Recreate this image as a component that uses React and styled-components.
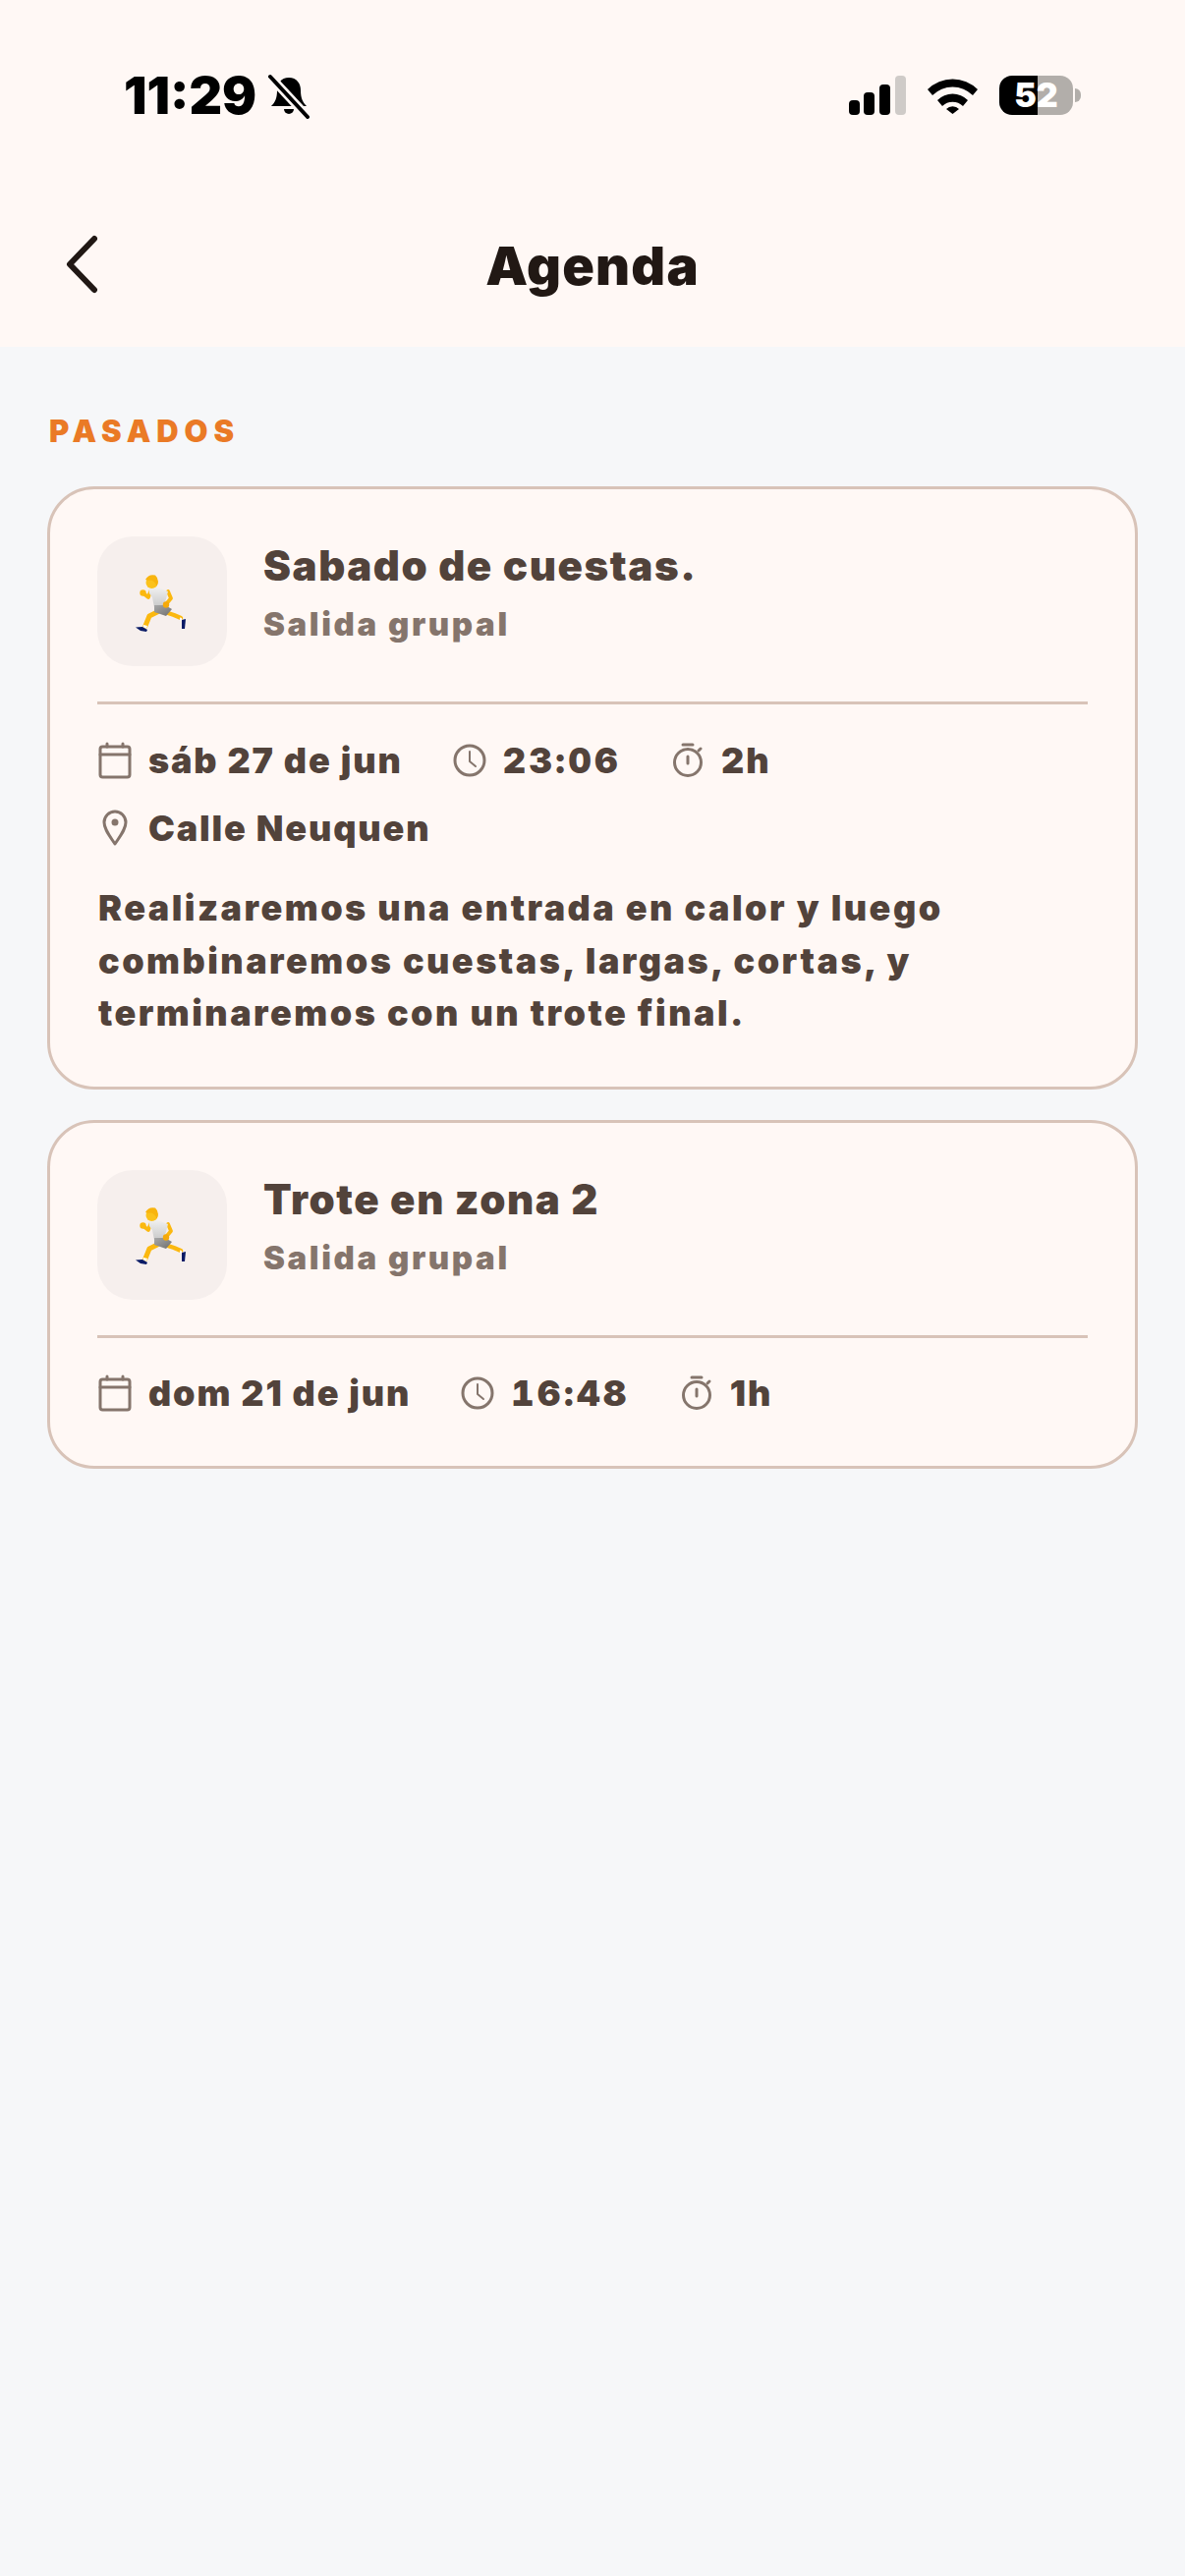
import React from "react";
import styled, { createGlobalStyle } from "styled-components";

const GlobalStyle = createGlobalStyle`
  html, body { margin: 0; padding: 0; background: #f6f7f9; }
  body { font-family: Inter, "Liberation Sans", sans-serif; }
  * { box-sizing: border-box; }
`;

const Page = styled.div`
  width: 1206px;
  min-height: 2622px;
  background: #f6f7f9;
  display: flex;
  flex-direction: column;
`;

const Header = styled.header`
  background: #fff8f5;
  height: 353px;
  display: flex;
  flex-direction: column;
`;

const StatusBar = styled.div`
  height: 190px;
  padding: 67px 106px 0 126px;
  display: flex;
  justify-content: space-between;
  align-items: flex-start;
`;

const TimeGroup = styled.div`
  display: flex;
  align-items: center;
  gap: 11px;
  height: 62px;
`;

const Time = styled.span`
  font-size: 52px;
  font-weight: 900;
  color: #000;
  line-height: 62px;
`;

const StatusIcons = styled.div`
  display: flex;
  align-items: center;
  height: 60px;
`;

const SignalIcon = styled.svg`
  width: 58px;
  height: 40px;
  margin-right: 22px;
`;

const WifiIcon = styled.svg`
  width: 51px;
  height: 38px;
  margin-right: 22px;
`;

const Battery = styled.div`
  width: 75px;
  height: 40px;
  border-radius: 13px;
  overflow: hidden;
  background: linear-gradient(90deg, #000 0 52%, #b2aeaa 52% 100%);
  color: #fff;
  font-size: 34px;
  font-weight: 900;
  line-height: 40px;
  text-align: center;
`;

const BatteryNub = styled.div`
  width: 6px;
  height: 14px;
  margin-left: 2px;
  background: #b2aeaa;
  border-radius: 0 7px 7px 0;
`;

const Nav = styled.div`
  height: 163px;
  padding-bottom: 2px;
  position: relative;
  display: flex;
  align-items: center;
  justify-content: center;
`;

const BackIcon = styled.svg`
  position: absolute;
  left: 64px;
  top: 49px;
  width: 40px;
  height: 60px;
`;

const Title = styled.h1`
  margin: 0;
  font-size: 54px;
  font-weight: 900;
  letter-spacing: 1.2px;
  color: #211814;
  line-height: 60px;
`;

const Content = styled.main`
  padding: 67px 48px 0;
  display: flex;
  flex-direction: column;
`;

const SectionLabel = styled.div`
  font-size: 31px;
  font-weight: 900;
  letter-spacing: 5.9px;
  color: #ea7a26;
  line-height: 38px;
  margin: 0 0 37px 2px;
`;

const CardList = styled.div`
  display: flex;
  flex-direction: column;
  gap: 31px;
`;

const Card = styled.article`
  width: 1110px;
  background: #fff8f5;
  border: 3px solid #d8c3b8;
  border-radius: 48px;
  padding: 48px 48px 39px;
`;

const CardTop = styled.div`
  display: flex;
  gap: 37px;
  padding-bottom: 36px;
  border-bottom: 3px solid #d8c3b8;
`;

const EmojiBox = styled.div`
  width: 132px;
  height: 132px;
  border-radius: 36px;
  background: #f6efed;
  display: flex;
  align-items: center;
  justify-content: center;
`;

const Runner = styled.svg`
  width: 53px;
  height: 59px;
  margin-top: 4px;
  margin-left: -2px;
`;

const CardHeading = styled.div`
  display: flex;
  flex-direction: column;
  padding-top: 3px;
`;

const CardTitle = styled.h2`
  margin: 0;
  font-size: 42px;
  font-weight: 900;
  letter-spacing: 1.55px;
  color: #52433b;
  line-height: 54px;
`;

const CardSubtitle = styled.div`
  font-size: 33px;
  font-weight: 900;
  letter-spacing: 2.6px;
  color: #85756c;
  line-height: 42px;
  margin-top: 11px;
`;

const MetaRow = styled.div`
  display: flex;
  align-items: center;
  gap: 50px;
  height: 69px;
  margin-top: ${(p) => (p.$first ? "22px" : "0")};
`;

const MetaItem = styled.div`
  display: flex;
  align-items: center;
  gap: 16px;
  font-size: 36px;
  font-weight: 900;
  font-variant-numeric: ${(p) => (p.$clock ? "tabular-nums" : "normal")};
  letter-spacing: ${(p) => (p.$clock ? "3.6px" : "1.85px")};
  color: #52433b;
  line-height: 44px;
`;

const MetaIcon = styled.svg`
  width: 36px;
  height: 38px;
  flex: none;
  fill: none;
  stroke: #85756c;
  stroke-width: 3;
  stroke-linecap: round;
  stroke-linejoin: round;
`;

const Description = styled.p`
  margin: 21px 0 8px 1px;
  font-size: 36px;
  font-weight: 900;
  letter-spacing: 2.45px;
  color: #52433b;
  line-height: 53.5px;
`;

const CalendarGlyph = () => (
  <MetaIcon viewBox="0 0 36 38">
    <rect x="3" y="5" width="30" height="31" rx="2.5" />
    <path d="M3 13h30M10 2v3M26 2v3" />
  </MetaIcon>
);

const ClockGlyph = () => (
  <MetaIcon viewBox="0 0 36 38">
    <circle cx="18" cy="19" r="15" />
    <path d="M18 10v10l6 5" strokeWidth="2" />
  </MetaIcon>
);

const TimerGlyph = () => (
  <MetaIcon viewBox="0 0 36 38">
    <circle cx="18" cy="21" r="13.5" />
    <path d="M13 3h10M18 15v7M29 9l2-2" />
  </MetaIcon>
);

const PinGlyph = () => (
  <MetaIcon viewBox="0 0 36 38">
    <path d="M18 35C12 26 7 20 7 13a11 11 0 0 1 22 0c0 7-5 13-11 22z" />
    <circle cx="18" cy="13" r="3.5" fill="#85756c" strokeWidth="0" />
  </MetaIcon>
);

const RunnerEmoji = () => (
  <Runner viewBox="0 0 53 59">
    <defs>
      <linearGradient id="shirt" x1="0" y1="0" x2="0" y2="1">
        <stop offset="0" stopColor="#f2f2f2" />
        <stop offset="1" stopColor="#c9c9c9" />
      </linearGradient>
      <linearGradient id="shorts" x1="0" y1="0" x2="1" y2="1">
        <stop offset="0" stopColor="#a8a8a8" />
        <stop offset="1" stopColor="#6f6f6f" />
      </linearGradient>
    </defs>
    <g fill="none" stroke="#fbb80f" strokeLinecap="round" strokeLinejoin="round">
      <path d="M22 38 L14 42 L10 52" strokeWidth="5" />
      <path d="M30 38 L39 41 L46 44" strokeWidth="4.4" />
      <path d="M15 17 L13 23 L8 19" strokeWidth="3.8" />
      <path d="M33 17 L36 24 L31 30" strokeWidth="3.8" />
    </g>
    <path d="M13 13 L20 12 L33 17 L29 32 L19 33 L17 23 L14 19 Z" fill="url(#shirt)" />
    <path d="M19 31 L30 31 L37 35 L31 42 L19 38 Z" fill="url(#shorts)" />
    <circle cx="7.5" cy="18.5" r="3.2" fill="#fbb80f" />
    <circle cx="31" cy="30.5" r="3.2" fill="#f5a90a" />
    <circle cx="16.5" cy="8" r="6" fill="#fbc21c" />
    <path d="M10 5 Q13 -1 20 0.5 Q25 5 21.5 12 Q20 6 15 5.5 Q12 6 10 5 Z" fill="#f8b40e" />
    <path d="M0 53.5 L7 53 L12 56 L11 58 L5 57 Z" fill="#0a1b66" />
    <path d="M47 46 L51 45 L50 55 L47 55 Z" fill="#0a1b66" />
    <path d="M8 51 L12 52 L11 54.5 L8 53.5 Z M45 43.5 L47 44 L47 47 L45 46.5 Z" fill="#fff" />
  </Runner>
);

const events = [
  {
    title: "Sabado de cuestas.",
    date: "sáb 27 de jun",
    time: "23:06",
    duration: "2h",
    place: "Calle Neuquen",
    text: [
      "Realizaremos una entrada en calor y luego",
      "combinaremos cuestas, largas, cortas, y",
      "terminaremos con un trote final.",
    ],
  },
  { title: "Trote en zona 2", date: "dom 21 de jun", time: "16:48", duration: "1h" },
];

export default function App() {
  return (
    <Page>
      <GlobalStyle />
      <Header>
        <StatusBar>
          <TimeGroup>
            <Time>11:29</Time>
            <svg width="44" height="46" viewBox="0 0 44 46">
              <path d="M22 4c-8 0-12 6-12 13 0 8-2 12-6 16h36c-4-4-6-8-6-16 0-7-4-13-12-13z" fill="#000" />
              <path d="M17 36a5 5 0 0 0 10 0z" fill="#000" />
              <path d="M3 3 L41 44" stroke="#fff8f5" strokeWidth="9" />
              <path d="M3 3 L41 44" stroke="#000" strokeWidth="4" strokeLinecap="round" />
            </svg>
          </TimeGroup>
          <StatusIcons>
            <SignalIcon viewBox="0 0 58 40">
              <rect x="0" y="25" width="11" height="15" rx="4" fill="#000" />
              <rect x="15" y="17" width="11" height="23" rx="4" fill="#000" />
              <rect x="31" y="9" width="11" height="31" rx="4" fill="#000" />
              <rect x="47" y="0" width="11" height="40" rx="4" fill="#cfcbc8" />
            </SignalIcon>
            <WifiIcon viewBox="0 0 51 38">
              <path d="M0 13 A36 36 0 0 1 51 13 L46 19 A29 29 0 0 0 5 19 Z" fill="#000" />
              <path d="M10 24 A22 22 0 0 1 41 24 L36 30 A15 15 0 0 0 15 30 Z" fill="#000" />
              <path d="M19 33 A9 9 0 0 1 32 33 L25.5 38 Z" fill="#000" />
            </WifiIcon>
            <Battery>52</Battery>
            <BatteryNub />
          </StatusIcons>
        </StatusBar>
        <Nav>
          <BackIcon viewBox="0 0 40 60">
            <path d="M32 4 L7 30 L32 56" fill="none" stroke="#211814" strokeWidth="6" strokeLinecap="round" strokeLinejoin="round" />
          </BackIcon>
          <Title>Agenda</Title>
        </Nav>
      </Header>
      <Content>
        <SectionLabel>PASADOS</SectionLabel>
        <CardList>
          {events.map((ev) => (
            <Card key={ev.title}>
              <CardTop>
                <EmojiBox>
                  <RunnerEmoji />
                </EmojiBox>
                <CardHeading>
                  <CardTitle>{ev.title}</CardTitle>
                  <CardSubtitle>Salida grupal</CardSubtitle>
                </CardHeading>
              </CardTop>
              <MetaRow $first>
                <MetaItem><CalendarGlyph />{ev.date}</MetaItem>
                <MetaItem $clock><ClockGlyph />{ev.time}</MetaItem>
                <MetaItem><TimerGlyph />{ev.duration}</MetaItem>
              </MetaRow>
              {ev.place && (
                <MetaRow>
                  <MetaItem><PinGlyph />{ev.place}</MetaItem>
                </MetaRow>
              )}
              {ev.text && (
                <Description>
                  {ev.text.map((line) => (
                    <React.Fragment key={line}>{line}<br /></React.Fragment>
                  ))}
                </Description>
              )}
            </Card>
          ))}
        </CardList>
      </Content>
    </Page>
  );
}
